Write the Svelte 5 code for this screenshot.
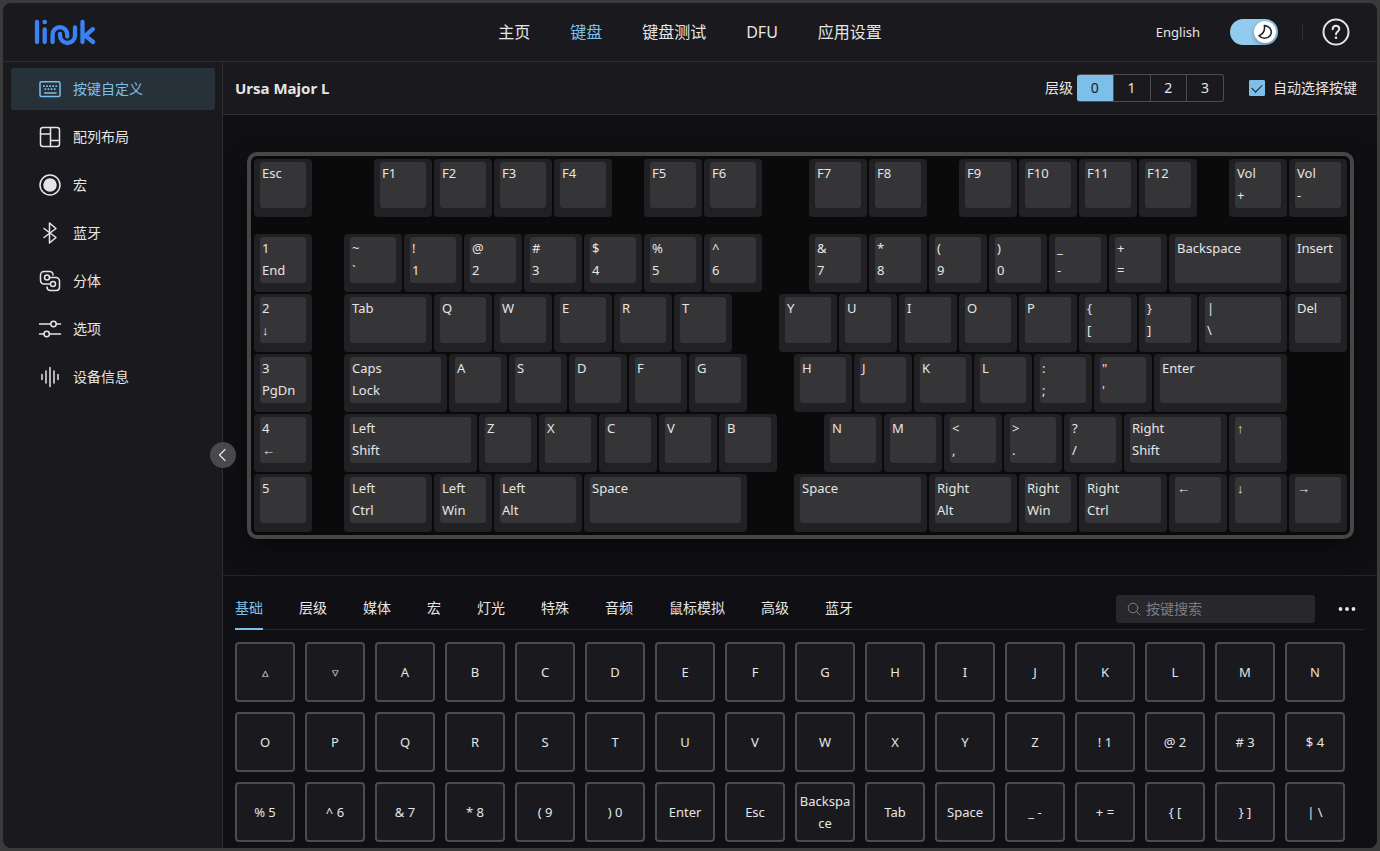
<script>
	const nav = ['主页', '键盘', '键盘测试', 'DFU', '应用设置'];
	const menu = [
		{ icon: 'keyboard', label: '按键自定义' },
		{ icon: 'layout', label: '配列布局' },
		{ icon: 'macro', label: '宏' },
		{ icon: 'bluetooth', label: '蓝牙' },
		{ icon: 'split', label: '分体' },
		{ icon: 'options', label: '选项' },
		{ icon: 'info', label: '设备信息' }
	];
	const tabs = ['基础', '层级', '媒体', '宏', '灯光', '特殊', '音频', '鼠标模拟', '高级', '蓝牙'];
	const layers = [0, 1, 2, 3];

	// one key unit in pixels
	const UNIT = 60;

	// a number is an empty gap, a string a 1u key, a pair is [label, width]
	const rows = [
		['Esc', 1, 'F1', 'F2', 'F3', 'F4', 0.5, 'F5', 'F6', 0.75, 'F7', 'F8', 0.5, 'F9', 'F10', 'F11', 'F12', 0.5, 'Vol\n+', 'Vol\n-'],
		['1\nEnd', 0.5, '~\n`', '!\n1', '@\n2', '#\n3', '$\n4', '%\n5', '^\n6', 0.75, '&\n7', '*\n8', '(\n9', ')\n0', '_\n-', '+\n=', ['Backspace', 2], 'Insert'],
		['2\n↓', 0.5, ['Tab', 1.5], 'Q', 'W', 'E', 'R', 'T', 0.75, 'Y', 'U', 'I', 'O', 'P', '{\n[', '}\n]', ['|\n\\', 1.5], 'Del'],
		['3\nPgDn', 0.5, ['Caps\nLock', 1.75], 'A', 'S', 'D', 'F', 'G', 0.75, 'H', 'J', 'K', 'L', ':\n;', '"\n\'', ['Enter', 2.25]],
		['4\n←', 0.5, ['Left\nShift', 2.25], 'Z', 'X', 'C', 'V', 'B', 0.75, 'N', 'M', '<\n,', '>\n.', '?\n/', ['Right\nShift', 1.75], '↑'],
		['5', 0.5, ['Left\nCtrl', 1.5], 'Left\nWin', ['Left\nAlt', 1.5], ['Space', 2.75], 0.75, ['Space', 2.25], ['Right\nAlt', 1.5], 'Right\nWin', ['Right\nCtrl', 1.5], '←', '↓', '→']
	];

	const keycodes = [
		'▵', '▿', ...'ABCDEFGHIJKLMNOPQRSTUVWXYZ',
		'! 1', '@ 2', '# 3', '$ 4', '% 5', '^ 6', '& 7', '* 8', '( 9', ') 0',
		'Enter', 'Esc', 'Backspace', 'Tab', 'Space', '_ -', '+ =', '{ [', '} ]', '| \\'
	];

	let page = $state('键盘');
	let section = $state('keyboard');
	let tab = $state('基础');
	let layer = $state(0);
	let dark = $state(true);
	let autoSelect = $state(true);
	let search = $state('');
	let collapsed = $state(false);
</script>

<div class="app">
	<header>
		<svg class="logo" viewBox="0 0 62 28" role="img" aria-label="linuk">
			<path d="M3 4v20M10.700 11.500v12.500M18.600 24v-7.500a7.300 7.300 0 0 1 14.600 0v2M26 16v1.500a7.500 7.500 0 0 0 15 0V9.500M48.500 4v20M58.800 11.200l-8 7M51.500 17.800l7.500 6.200" />
			<circle cx="10.700" cy="4" r="2.300" />
		</svg>
		<nav>
			{#each nav as item}
				<a href="#{item}" class:active={page === item} onclick={() => (page = item)}>{item}</a>
			{/each}
		</nav>
		<div class="tools">
			<button class="lang">English</button>
			<button class="theme" class:dark role="switch" aria-checked={dark} aria-label="Dark mode" onclick={() => (dark = !dark)}>
				<span class="knob">
					<svg viewBox="0 0 16 16"><path d="M7.300 1.500c.9 4.800-.5 8.200-5.300 10.200 3 3.400 8.300 3.400 11 0 2.900-3.800 1-9.200-5.700-10.200z" /></svg>
				</span>
			</button>
			<span class="divider"></span>
			<button class="help" aria-label="Help">
				<svg viewBox="0 0 28 28">
					<circle cx="14" cy="14" r="12.500" />
					<path d="M10.700 11.300c0-4.600 6.600-4.500 6.600-.3 0 2.300-3.300 2.700-3.300 5.300" />
					<circle class="dot" cx="14" cy="19.800" r="1.300" />
				</svg>
			</button>
		</div>
	</header>

	<div class="body">
		<aside class:collapsed>
			{#each menu as item}
				<button class="item" class:active={section === item.icon} onclick={() => (section = item.icon)}>
					<svg viewBox="0 0 24 24">
						{#if item.icon === 'keyboard'}
							<rect x="2" y="4.700" width="20" height="14.800" rx="1.500" />
							<path class="keys" d="M5 9.200h14.500M6.500 12.200h12" />
							<path d="M6.500 16h11.500" />
						{:else if item.icon === 'layout'}
							<rect x="2.500" y="2.500" width="19" height="19" rx="2.500" />
							<path d="M12.500 2.500v19M2.500 9h10M12.500 15.500h9" />
						{:else if item.icon === 'macro'}
							<circle cx="12" cy="12" r="10" />
							<circle class="solid" cx="12" cy="12" r="6" />
						{:else if item.icon === 'bluetooth'}
							<path d="M6 7.500l12 9-6.500 5.500V2L18 7.500l-12 9" />
						{:else if item.icon === 'split'}
							<path d="M11.500 8.500H18a3.500 3.500 0 0 1 3.500 3.500v6.300a3.200 3.200 0 0 1-3.200 3.200H12a3.500 3.500 0 0 1-3-3.500M12.500 15H6a3.500 3.500 0 0 1-3.500-3.500V6A3.500 3.500 0 0 1 6 2.500h6A3.200 3.200 0 0 1 15 6" />
							<circle cx="9" cy="8.500" r="2.500" />
							<circle cx="15" cy="15" r="2.500" />
						{:else if item.icon === 'options'}
							<path d="M1.500 7h11M18.500 7h4M1.500 17H6M11.500 17h11" />
							<circle cx="15.500" cy="7" r="2.700" />
							<circle cx="8.700" cy="17" r="2.700" />
						{:else}
							<path d="M4 9.500v5M8 6v12M12 2.500v19M16 6v12M20 9.500v5" />
						{/if}
					</svg>
					<span>{item.label}</span>
				</button>
			{/each}
			<button class="collapse" aria-label="Collapse menu" onclick={() => (collapsed = !collapsed)}>
				<svg viewBox="0 0 14 14"><path d="M9 1.500L3.500 7 9 12.500" /></svg>
			</button>
		</aside>

		<main>
			<div class="toolbar">
				<h1>Ursa Major L</h1>
				<span class="caption">层级</span>
				<div class="layers">
					{#each layers as n}
						<button class:active={layer === n} onclick={() => (layer = n)}>{n}</button>
					{/each}
				</div>
				<label class="auto">
					<input type="checkbox" bind:checked={autoSelect} />
					自动选择按键
				</label>
			</div>

			<section class="stage">
				<div class="board">
					{#each rows as row}
						<div class="row">
							{#each row as key}
								{#if typeof key === 'number'}
									<span class="gap" style="width: {key * UNIT}px"></span>
								{:else}
									{@const [label, width] = Array.isArray(key) ? key : [key, 1]}
									<button class="key" style="width: {width * UNIT - 2}px"><span class="cap">{label}</span></button>
								{/if}
							{/each}
						</div>
					{/each}
				</div>
			</section>

			<section class="picker">
				<div class="tabbar">
					<div class="tabs" role="tablist">
						{#each tabs as name}
							<button role="tab" aria-selected={tab === name} class:active={tab === name} onclick={() => (tab = name)}>{name}</button>
						{/each}
					</div>
					<label class="search">
						<svg viewBox="0 0 14 14"><circle cx="6" cy="6" r="4.800" /><path d="M9.500 9.500l3.500 3.500" /></svg>
						<input type="text" placeholder="按键搜索" aria-label="按键搜索" bind:value={search} />
					</label>
					<button class="more" aria-label="More">
						<svg viewBox="0 0 18 6"><circle cx="2.500" cy="3" r="1.900" /><circle cx="9" cy="3" r="1.900" /><circle cx="15.500" cy="3" r="1.900" /></svg>
					</button>
				</div>
				<div class="codes">
					{#each keycodes as code}
						<button class="code">{code}</button>
					{/each}
				</div>
			</section>
		</main>
	</div>
</div>

<style>
	:global(body) {
		background: #3a3a3a;
	}

	* {
		box-sizing: border-box;
	}

	.app {
		display: flex;
		flex-direction: column;
		height: calc(100vh - 6px);
		margin: 3px;
		overflow: hidden;
		border-radius: 8px;
		background: #1a1a1e;
		color: #e5e5e5;
		font-family: 'Noto Sans', 'Liberation Sans', 'Noto Sans CJK SC', sans-serif;
		font-size: 14px;
		line-height: 22px;
	}

	button {
		margin: 0;
		padding: 0;
		border: 0;
		background: none;
		color: inherit;
		font: inherit;
		cursor: pointer;
	}

	svg {
		display: block;
		flex: none;
		fill: none;
		stroke: currentColor;
		stroke-width: 1.5;
		stroke-linecap: round;
		stroke-linejoin: round;
	}

	header {
		flex: none;
		display: grid;
		grid-template-columns: 1fr auto 1fr;
		align-items: center;
		height: 59px;
		padding: 0 27px;
		border-bottom: 1px solid #2e2e32;
	}

	.logo {
		width: 62px;
		height: 28px;
		margin-left: 4px;
		color: #3b82f6;
		stroke-width: 4.3;
	}

	.logo circle {
		fill: currentColor;
		stroke: none;
	}

	nav {
		display: flex;
		gap: 40px;
		font-size: 16px;
	}

	nav a {
		color: inherit;
		text-decoration: none;
	}

	nav a.active {
		color: #7cc0ea;
	}

	.tools {
		display: flex;
		align-items: center;
		justify-content: flex-end;
	}

	.lang {
		margin-right: 30px;
		font-size: 13px;
	}

	.theme {
		display: flex;
		width: 48px;
		height: 26px;
		padding: 2px;
		border-radius: 13px;
		background: #55555a;
	}

	.theme.dark {
		justify-content: flex-end;
		background: #92cbee;
	}

	.knob {
		display: grid;
		place-items: center;
		width: 22px;
		height: 22px;
		border-radius: 50%;
		background: #fff;
		color: #222;
		box-shadow: 0 2px 4px rgba(0, 0, 0, 0.3);
	}

	.knob svg {
		width: 16px;
		height: 16px;
	}

	.divider {
		width: 1px;
		height: 16px;
		margin: 0 19px 0 24px;
		background: #2e2e32;
	}

	.help svg {
		width: 28px;
		height: 28px;
		stroke-width: 2;
	}

	.help .dot {
		fill: currentColor;
		stroke: none;
	}

	.body {
		flex: 1;
		display: flex;
		min-height: 0;
	}

	aside {
		position: relative;
		flex: none;
		display: flex;
		flex-direction: column;
		gap: 6px;
		width: 220px;
		padding: 6px 7px 6px 8px;
		border-right: 1px solid #2e2e32;
	}

	aside.collapsed {
		width: 80px;
	}

	aside.collapsed .item {
		padding-left: 20px;
	}

	aside.collapsed .item span {
		display: none;
	}

	.item {
		display: flex;
		align-items: center;
		gap: 11px;
		height: 42px;
		padding-left: 27px;
		border-radius: 3px;
	}

	.item.active {
		background: #27313a;
		color: #7cc0ea;
	}

	.item svg {
		width: 24px;
		height: 24px;
	}

	.item .solid {
		fill: currentColor;
	}

	.item .keys {
		stroke-dasharray: 1.7 1.4;
		stroke-linecap: butt;
		stroke-width: 1.8;
	}

	.collapse {
		position: absolute;
		top: 50%;
		right: -14px;
		z-index: 1;
		display: grid;
		place-items: center;
		width: 26px;
		height: 26px;
		border-radius: 50%;
		background: #48484e;
		transform: translateY(-50%);
	}

	.collapse svg {
		width: 14px;
		height: 14px;
		stroke-width: 1.2;
	}

	main {
		flex: 1;
		display: flex;
		flex-direction: column;
		min-width: 0;
		background: #101014;
	}

	.toolbar {
		flex: none;
		display: flex;
		align-items: center;
		height: 53px;
		padding: 0 20px 0 12px;
		border-bottom: 1px solid #2e2e32;
		background: #1a1a1e;
	}

	h1 {
		flex: 1;
		margin: 0;
		font-size: 15px;
		font-weight: 700;
	}

	.layers {
		display: flex;
		width: 147px;
		height: 28px;
		margin: 0 25px 0 4px;
		overflow: hidden;
		border: 1px solid #4c4c4f;
		border-left: 0;
		border-radius: 3px;
	}

	.layers button {
		flex: 1;
	}

	.layers button + button {
		border-left: 1px solid #4c4c4f;
	}

	.layers button.active {
		background: #7cc0ea;
		color: #1a1a1e;
	}

	.auto {
		display: flex;
		align-items: center;
		gap: 8px;
	}

	.auto input {
		display: grid;
		place-items: center;
		width: 16px;
		height: 16px;
		margin: 0;
		appearance: none;
		border: 1px solid #7cc0ea;
		border-radius: 1px;
	}

	.auto input:checked {
		background: #7cc0ea;
	}

	.auto input:checked::after {
		content: '';
		width: 9px;
		height: 5px;
		margin-bottom: 3px;
		border: solid #1a1a1e;
		border-width: 0 0 1px 1px;
		transform: rotate(-45deg);
	}

	.stage {
		flex: none;
		display: flex;
		justify-content: center;
		padding: 37px 23px 36px 24px;
		border-bottom: 1px solid #26262a;
	}

	.board {
		padding: 2px;
		border: 4px solid #464646;
		border-radius: 10px;
		background: #0a0a0a;
		box-shadow: 0 8px 24px rgba(0, 0, 0, 0.5);
	}

	.row {
		display: flex;
		height: 60px;
	}

	.row:first-child {
		margin-bottom: 15px;
	}

	.gap {
		flex: none;
	}

	.key {
		flex: none;
		height: 58px;
		margin: 1px;
		padding: 3px 6px 9px;
		border-radius: 4px;
		background: #212125;
	}

	.cap {
		display: block;
		height: 46px;
		padding-left: 2px;
		border-radius: 3px;
		background: #353537;
		font-size: 13px;
		text-align: left;
		white-space: pre;
	}

	.picker {
		flex: 1;
		display: flex;
		flex-direction: column;
		min-height: 0;
		padding: 12px 12px 0;
	}

	.tabbar {
		flex: none;
		display: flex;
		align-items: center;
		height: 42px;
		border-bottom: 1px solid #26262a;
	}

	.tabs {
		flex: 1;
		display: flex;
		gap: 36px;
	}

	.tabs button {
		height: 42px;
		border-bottom: 2px solid transparent;
	}

	.tabs button.active {
		border-color: #7cc0ea;
		color: #7cc0ea;
	}

	.search {
		display: flex;
		align-items: center;
		gap: 5px;
		width: 199px;
		height: 28px;
		padding: 0 11px;
		border-radius: 3px;
		background: #28282c;
		color: #7d7d80;
	}

	.search svg {
		width: 14px;
		height: 14px;
		stroke-width: 1;
	}

	.search input {
		flex: 1;
		min-width: 0;
		padding: 0;
		border: 0;
		outline: none;
		background: none;
		color: #e5e5e5;
		font: inherit;
	}

	.search input::placeholder {
		color: #7d7d80;
	}

	.more {
		margin: 0 9px 0 23px;
	}

	.more svg {
		width: 18px;
		height: 6px;
	}

	.more circle {
		fill: currentColor;
		stroke: none;
	}

	.codes {
		flex: 1;
		display: flex;
		flex-wrap: wrap;
		align-content: flex-start;
		gap: 10px;
		min-height: 0;
		padding-top: 12px;
		overflow: hidden;
	}

	.code {
		width: 60px;
		height: 60px;
		border: 2px solid #4c4c4f;
		border-radius: 4px;
		background: #1a1a1e;
		font-size: 13px;
		overflow-wrap: anywhere;
	}
</style>
